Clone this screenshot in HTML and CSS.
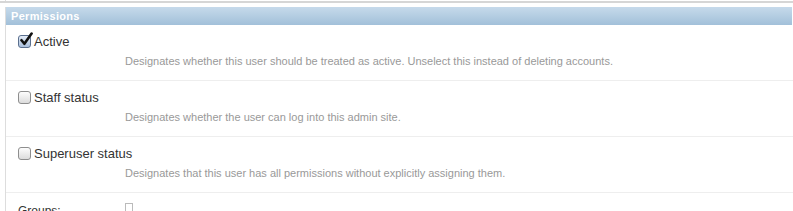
FILE: index.html
```html
<!DOCTYPE html>
<html lang="en">
<head>
    <meta charset="UTF-8">
    <title>Change user | Django site admin</title>
    <link rel="stylesheet" href="styles.css">
</head>
<body>
    <div class="prev-module"></div>

    <fieldset class="module aligned">
        <h2>Permissions</h2>

        <div class="form-row">
            <div class="checkbox-row">
                <span class="box checked">
                    <svg width="16" height="16" viewBox="0 0 16 16">
                        <path d="M3.5 8.2 L6.4 11.8 L13.6 1.6" fill="none" stroke="#111" stroke-width="2.6" stroke-linecap="round" stroke-linejoin="round"/>
                    </svg>
                </span>
                <label class="vCheckboxLabel">Active</label>
            </div>
            <p class="help">Designates whether this user should be treated as active. Unselect this instead of deleting accounts.</p>
        </div>

        <div class="form-row">
            <div class="checkbox-row">
                <span class="box"></span>
                <label class="vCheckboxLabel">Staff status</label>
            </div>
            <p class="help">Designates whether the user can log into this admin site.</p>
        </div>

        <div class="form-row">
            <div class="checkbox-row">
                <span class="box"></span>
                <label class="vCheckboxLabel">Superuser status</label>
            </div>
            <p class="help">Designates that this user has all permissions without explicitly assigning them.</p>
        </div>

        <div class="form-row groups">
            <label class="field-label">Groups:</label>
            <div class="select-multiple"></div>
        </div>
    </fieldset>
</body>
</html>
```

FILE: styles.css
```css
* {
    margin: 0;
    padding: 0;
    box-sizing: border-box;
}

body {
    font-family: 'Liberation Sans', Arial, sans-serif;
    background: #fff;
    color: #333;
    overflow: hidden;
}

.prev-module {
    height: 3px;
    border-bottom: 2px solid #d6d6d6;
    box-shadow: inset 5px 0 0 #fff, inset 6px 0 0 #ddd;
}

fieldset.module {
    border: none;
    border-left: 1px solid #ddd;
    margin: 4px 0 0 5px;
}

.module h2 {
    height: 18px;
    margin-right: 1px;
    padding: 3px 5px 0;
    font-size: 11px;
    font-weight: bold;
    letter-spacing: 0.3px;
    color: #fff;
    background: linear-gradient(#c6daeb, #a2c0d9);
}

.form-row {
    height: 56px;
    padding: 7px 12px 0;
    border-bottom: 1px solid #eee;
}

.checkbox-row {
    display: flex;
    align-items: center;
    height: 18px;
}

.box {
    position: relative;
    width: 13px;
    height: 13px;
    margin-right: 3px;
    border: 1px solid #8e8e8e;
    border-radius: 3px;
    background: linear-gradient(#fdfdfd, #dcdcdc);
}

.box.checked {
    border-color: #5a6f8e;
    background: linear-gradient(#e4ecf7, #a9bfdc);
}

.box svg {
    position: absolute;
    left: -1px;
    top: -4px;
}

.vCheckboxLabel {
    font-size: 13px;
    color: #333;
}

.help {
    margin: 4px 0 0 107px;
    font-size: 11px;
    line-height: 14px;
    color: #999;
}

.groups {
    display: flex;
    padding-top: 11px;
}

.field-label {
    width: 107px;
    font-size: 12px;
    color: #333;
}

.select-multiple {
    width: 8px;
    height: 12px;
    border: 1px solid #bbb;
    margin-top: -1px;
}
```
